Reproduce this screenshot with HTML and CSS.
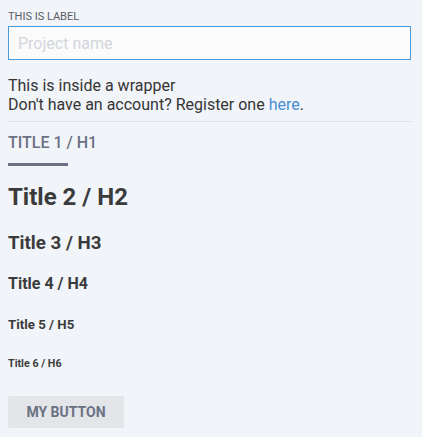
FILE: index.html
```html
<!DOCTYPE html>
<html>
<head>
<meta charset="utf-8">
<link rel="stylesheet" href="styles.css">
</head>
<body>
<div class="page">
  <label class="field-label" for="project">This is label</label>
  <input class="text-input" id="project" type="text" placeholder="Project name">
  <div class="wrapper">
    <p class="copy">This is inside a wrapper</p>
    <p class="copy">Don't have an account? Register one <a class="link" href="#">here</a>.</p>
  </div>
  <hr class="divider">
  <h1 class="t1">Title 1 / H1</h1>
  <h2 class="t2">Title 2 / H2</h2>
  <h3 class="t3">Title 3 / H3</h3>
  <h4 class="t4">Title 4 / H4</h4>
  <h5 class="t5">Title 5 / H5</h5>
  <h6 class="t6">Title 6 / H6</h6>
  <button class="btn" type="button">My button</button>
</div>
</body>
</html>
```

FILE: styles.css
```css
html, body {
  margin: 0;
  padding: 0;
  background: #f1f4f8;
}
body {
  font-family: Roboto, "Liberation Sans", sans-serif;
  color: #3b3b3b;
}
.page {
  width: 403px;
  padding: 10px 0 0 8px;
  display: flex;
  flex-direction: column;
  align-items: flex-start;
}
.field-label {
  display: block;
  font-size: 11px;
  line-height: 13px;
  text-transform: uppercase;
  color: #585c66;
}
.text-input {
  box-sizing: border-box;
  width: 403px;
  height: 34px;
  margin: 3px 0 0;
  padding: 0 9px;
  border: 1px solid #4a9bdb;
  border-radius: 0;
  background: #fbfbfb;
  font-family: inherit;
  font-size: 16px;
  color: #333;
  outline: none;
}
.text-input::placeholder {
  color: #d3d6dd;
}
.wrapper {
  margin-top: 16px;
}
.copy {
  margin: 0;
  font-size: 16px;
  line-height: 19px;
  color: #353535;
}
.link {
  color: #4a8fd4;
  text-decoration: none;
}
.divider {
  align-self: stretch;
  margin: 7px 0 0;
  border: 0;
  height: 1px;
  background: #dcdfe5;
}
.t1, .t2, .t3, .t4, .t5, .t6 {
  margin: 0;
  line-height: 1;
  font-weight: 700;
}
.t1 {
  margin-top: 13px;
  font-size: 16px;
  font-weight: 500;
  text-transform: uppercase;
  color: #6a7184;
}
.t1::after {
  content: "";
  display: block;
  width: 60px;
  height: 3px;
  margin-top: 12px;
  background: #6a7184;
}
.t2 {
  margin-top: 19px;
  font-size: 24px;
}
.t3 {
  margin-top: 25px;
  font-size: 18.72px;
}
.t4 {
  margin-top: 23.5px;
  font-size: 16px;
}
.t5 {
  margin-top: 25.3px;
  font-size: 13.28px;
}
.t6 {
  margin-top: 28px;
  font-size: 10.72px;
}
.btn {
  margin-top: 26px;
  width: 116px;
  height: 32px;
  border: 0;
  border-radius: 3px;
  background: #e3e5e9;
  color: #6a7184;
  font-family: inherit;
  font-size: 14px;
  font-weight: 700;
  text-transform: uppercase;
  padding: 0;
}
```
